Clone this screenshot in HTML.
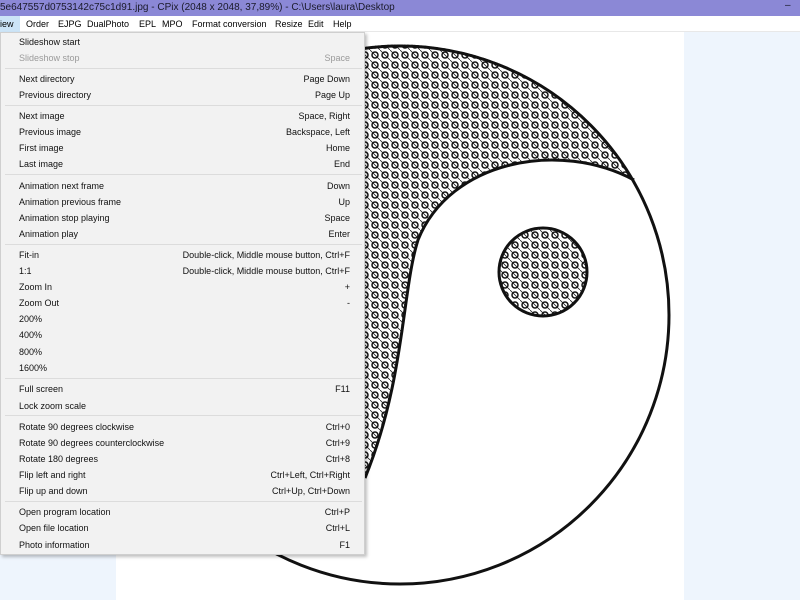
<!DOCTYPE html>
<html><head><meta charset="utf-8"><style>
*{margin:0;padding:0;box-sizing:border-box}
body{width:800px;height:600px;overflow:hidden;background:#eef5fd;font-family:"Liberation Sans",sans-serif;position:relative}
#title{position:absolute;left:0;top:0;width:800px;height:16px;background:#8b88d6;color:#1a1a2a;font-size:10px;line-height:16px;white-space:nowrap;z-index:5}
#mb{position:absolute;left:0;top:16px;width:800px;height:16px;background:#fff;font-size:9px;line-height:16px;border-bottom:1px solid #e8e8e8;z-index:5}
#mb span{position:absolute;top:0}
#img{position:absolute;left:116px;top:32px;width:568px;height:568px;background:#fff}
svg{position:absolute;left:0;top:0}
#menu{position:absolute;left:0;top:32px;width:365px;height:523px;background:#f2f2f2;border:1px solid #cfcfcf;box-shadow:2px 2px 3px rgba(0,0,0,.25);font-size:9px;color:#111;z-index:6}
.r{position:absolute;left:18px;width:331px;height:14px;line-height:14px}
.r b{font-weight:normal;position:absolute;right:0;top:0}
.g{color:#9a9a9a}
.s{position:absolute;left:4px;width:357px;border-top:1px solid #dcdcdc}
</style></head><body>
<div id="img"></div>
<svg width="800" height="600">
<defs><pattern id="p" width="10" height="10" patternUnits="userSpaceOnUse"><rect width="10" height="10" fill="#fff"/><circle cx="5" cy="5" r="3" fill="none" stroke="#111" stroke-width="1.5"/><path d="M0 0L10 10" stroke="#222" stroke-width="0.8"/></pattern></defs>
<path d="M634,180 C560,140 450,160 418,240 C402,290 405,380 365,478 L193,488 A270 270 0 1 1 634,180 Z" fill="url(#p)"/>
<path d="M634,180 C560,140 450,160 418,240 C402,290 405,380 365,478" fill="none" stroke="#111" stroke-width="3"/>
<circle cx="400" cy="315" r="269" fill="none" stroke="#111" stroke-width="3"/>
<circle cx="543" cy="272" r="44" fill="url(#p)" stroke="#111" stroke-width="3"/>
</svg>
<div id="title">5e647557d0753142c75c1d91.jpg - CPix (2048 x 2048, 37,89%) - C:\Users\laura\Desktop<span style="position:absolute;left:785px;top:-2px">–</span></div>
<div id="mb"><span style="left:0;width:20px;background:#cce4f7">iew</span><span style="left:26px">Order</span><span style="left:58px">EJPG</span><span style="left:87px">DualPhoto</span><span style="left:139px">EPL</span><span style="left:162px">MPO</span><span style="left:192px">Format conversion</span><span style="left:275px">Resize</span><span style="left:308px">Edit</span><span style="left:333px">Help</span></div>
<div id="menu">
<div class="r" style="top:2px">Slideshow start</div>
<div class="r g" style="top:18px">Slideshow stop<b>Space</b></div>
<div class="s" style="top:35px"></div>
<div class="r" style="top:39px">Next directory<b>Page Down</b></div>
<div class="r" style="top:55px">Previous directory<b>Page Up</b></div>
<div class="s" style="top:72px"></div>
<div class="r" style="top:76px">Next image<b>Space, Right</b></div>
<div class="r" style="top:92px">Previous image<b>Backspace, Left</b></div>
<div class="r" style="top:108px">First image<b>Home</b></div>
<div class="r" style="top:124px">Last image<b>End</b></div>
<div class="s" style="top:141px"></div>
<div class="r" style="top:146px">Animation next frame<b>Down</b></div>
<div class="r" style="top:162px">Animation previous frame<b>Up</b></div>
<div class="r" style="top:178px">Animation stop playing<b>Space</b></div>
<div class="r" style="top:194px">Animation play<b>Enter</b></div>
<div class="s" style="top:211px"></div>
<div class="r" style="top:215px">Fit-in<b>Double-click, Middle mouse button, Ctrl+F</b></div>
<div class="r" style="top:231px">1:1<b>Double-click, Middle mouse button, Ctrl+F</b></div>
<div class="r" style="top:247px">Zoom In<b>+</b></div>
<div class="r" style="top:263px">Zoom Out<b>-</b></div>
<div class="r" style="top:279px">200%</div>
<div class="r" style="top:295px">400%</div>
<div class="r" style="top:312px">800%</div>
<div class="r" style="top:328px">1600%</div>
<div class="s" style="top:345px"></div>
<div class="r" style="top:349px">Full screen<b>F11</b></div>
<div class="r" style="top:366px">Lock zoom scale</div>
<div class="s" style="top:382px"></div>
<div class="r" style="top:387px">Rotate 90 degrees clockwise<b>Ctrl+0</b></div>
<div class="r" style="top:403px">Rotate 90 degrees counterclockwise<b>Ctrl+9</b></div>
<div class="r" style="top:419px">Rotate 180 degrees<b>Ctrl+8</b></div>
<div class="r" style="top:435px">Flip left and right<b>Ctrl+Left, Ctrl+Right</b></div>
<div class="r" style="top:451px">Flip up and down<b>Ctrl+Up, Ctrl+Down</b></div>
<div class="s" style="top:468px"></div>
<div class="r" style="top:472px">Open program location<b>Ctrl+P</b></div>
<div class="r" style="top:488px">Open file location<b>Ctrl+L</b></div>
<div class="r" style="top:505px">Photo information<b>F1</b></div>
</div>
</body></html>
